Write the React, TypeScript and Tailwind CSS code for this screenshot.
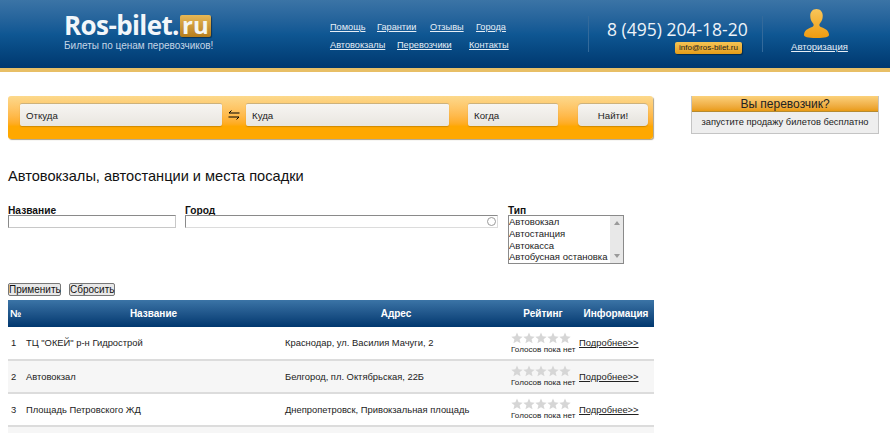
const navTop = [
  { label: "Помощь", cls: "w-[47px]" },
  { label: "Гарантии", cls: "w-[53px]" },
  { label: "Отзывы", cls: "w-[46px]" },
  { label: "Города", cls: "" },
];
const navBottom = [
  { label: "Автовокзалы", cls: "w-[67px]" },
  { label: "Перевозчики", cls: "w-[72px]" },
  { label: "Контакты", cls: "" },
];

const rows = [
  { id: 1, name: 'ТЦ "ОКЕЙ" р-н Гидрострой', address: "Краснодар, ул. Василия Мачуги, 2" },
  { id: 2, name: "Автовокзал", address: "Белгород, пл. Октябрьская, 22Б" },
  { id: 3, name: "Площадь Петровского ЖД", address: "Днепропетровск, Привокзальная площадь" },
];

const types = ["Автовокзал", "Автостанция", "Автокасса", "Автобусная остановка"];

function Stars() {
  return (
    <div className="flex h-[12px]">
      {[0, 1, 2, 3, 4].map((i) => (
        <svg key={i} viewBox="0 0 24 24" className="w-[12px] h-[12px] fill-[#d6d6d6]">
          <path d="M12 1l3.2 7.6 8.2.7-6.2 5.4 1.9 8L12 18.4 4.900 22.700l1.900-8L.6 9.300l8.200-.7z" />
        </svg>
      ))}
    </div>
  );
}

function SearchField({ label, cls }: { label: string; cls: string }) {
  return (
    <div className={`h-[23px] rounded-[2px] bg-gradient-to-b from-[#f7f5f2] to-[#e9e6e0] border-t border-[#cdb27c] shadow-[0_1px_1px_rgba(160,110,0,0.5)] pl-[6px] text-[9.700px] leading-[23px] text-[#222] ${cls}`}>
      {label}
    </div>
  );
}

export default function App() {
  return (
    <div className="w-[890px] h-[433px] overflow-hidden bg-white font-['Liberation_Sans',sans-serif] text-[#111]">
      <header className="h-[72px] bg-gradient-to-b from-[#3b74a6] via-[#0f5793] to-[#01386f] border-b-[4px] border-[#e8bf66] flex">
        <div className="w-[330px] pl-[64px] pt-[12px] shrink-0">
          <div className="flex items-center h-[27px]">
            <span className="text-[26px] leading-[27px] font-bold text-[#f2f6fa] font-['Open_Sans',sans-serif] tracking-[-0.6px]">Ros-bilet.</span>
            <span className="ml-[1px] h-[22px] w-[31px] rounded-[2px] bg-gradient-to-b from-[#e6b755] to-[#b57d1a] shadow-[1px_1px_1px_rgba(0,0,0,0.4)] text-[24px] leading-[20px] font-bold text-[#f4f6f2] text-center font-['Open_Sans',sans-serif]">ru</span>
          </div>
          <div className="text-[10px] leading-[13px] text-[#c4d5e6]">Билеты по ценам перевозчиков!</div>
        </div>
        <nav className="w-[258px] shrink-0 pt-[20px] text-[9.200px] leading-[14px] text-[#e6eef6] underline">
          <div className="flex h-[18px]">
            {navTop.map((n) => (
              <a key={n.label} className={n.cls}>{n.label}</a>
            ))}
          </div>
          <div className="flex">
            {navBottom.map((n) => (
              <a key={n.label} className={n.cls}>{n.label}</a>
            ))}
          </div>
        </nav>
        <div className="w-[175px] h-[36px] mt-[16px] shrink-0 border-l border-r border-[#336a9b] pl-[18px]">
          <div className="mt-[1px] text-[17.500px] leading-[24px] text-[#eef3f8] font-['Open_Sans',sans-serif] whitespace-nowrap">8 (495) 204-18-20</div>
          <div className="ml-[68px] mt-[1px] w-[67px] h-[12px] rounded-[2px] bg-gradient-to-b from-[#f5c453] to-[#e59d14] shadow-[1px_1px_1px_rgba(0,0,0,0.4)] text-[8px] leading-[12px] text-center text-[#222]">info@ros-bilet.ru</div>
        </div>
        <div className="flex-1 flex flex-col items-center pt-[9px] pr-[14px]">
          <svg viewBox="0 0 26 30" className="w-[25px] h-[29px] mr-[7px]">
            <defs>
              <linearGradient id="person" x1="0" y1="0" x2="0" y2="1">
                <stop offset="0" stopColor="#f9c65a" />
                <stop offset="1" stopColor="#ee9b10" />
              </linearGradient>
            </defs>
            <path fill="url(#person)" d="M13 0c4 0 6.500 3 6.500 7 0 3-1 6-3 8-.8 1-.8 2.500.5 3.500 3 1.500 8.500 2.500 9 8 .2 2-3 3.500-13 3.500S-.2 28.500 0 26.500c.5-5.500 6-6.500 9-8 1.300-1 1.300-2.500.5-3.500-2-2-3-5-3-8 0-4 2.500-7 6.500-7z" />
          </svg>
          <a className="mt-[2px] text-[9.500px] leading-[14px] text-[#e6eef6] underline">Авторизация</a>
        </div>
      </header>

      <div className="flex items-start pt-[24px] pl-[8px]">
        <div className="w-[646px] shrink-0">
          <div className="w-[645px] h-[43px] rounded-[3px] bg-gradient-to-b from-[#fcd98c] via-[#ffa800] via-70% to-[#ffa800] shadow-[1px_1px_1px_rgba(120,100,60,0.6)] pt-[7px] pl-[12px] flex text-[9.700px]">
            <SearchField label="Откуда" cls="w-[202px]" />
            <svg viewBox="0 0 12 10" className="w-[12px] h-[10px] mx-[6px] mt-[7px] stroke-[#000] fill-none">
              <path d="M3.500.5 1 3h10.500M8.500 9.500 11 7H.5" />
            </svg>
            <SearchField label="Куда" cls="w-[203px]" />
            <SearchField label="Когда" cls="w-[90px] ml-[19px]" />
            <div className="ml-[20px] w-[70px] h-[23px] rounded-[4px] bg-gradient-to-b from-[#f7f5f2] to-[#e5e2dc] shadow-[0_1px_1px_rgba(160,110,0,0.5)] border-t border-[#cdb27c] text-center leading-[23px] text-[#222]">Найти!</div>
          </div>

          <h1 className="mt-[28px] text-[14.600px] leading-[18px] text-[#111]">Автовокзалы, автостанции и места посадки</h1>

          <div className="mt-[19px] flex items-start text-[10.200px]">
            <label className="block w-[177px]">
              <div className="font-bold leading-[12px] h-[11px] pt-[1px]">Название</div>
              <input className="block w-[168px] h-[13px] border border-[#8a8a8a] border-b-[#c8c8c8] border-r-[#c8c8c8] bg-white" />
            </label>
            <label className="block w-[323px]">
              <div className="font-bold leading-[12px] h-[11px] pt-[1px]">Город</div>
              <div className="relative">
                <input className="block w-[313px] h-[13px] border border-[#8a8a8a] border-b-[#dcdcdc] border-r-[#dcdcdc] bg-white" />
                <span className="absolute left-[302px] top-[2px] w-[9px] h-[9px] rounded-full border border-[#9a9a9a]" />
              </div>
            </label>
            <div className="w-[116px]">
              <div className="font-bold leading-[12px] h-[11px] pt-[1px]">Тип</div>
              <div className="flex h-[49px] border border-[#8a8a8a] text-[9.500px] leading-[11.750px] text-[#222]">
                <div className="flex-1 whitespace-nowrap overflow-hidden">
                  {types.map((t) => (
                    <div key={t}>{t}</div>
                  ))}
                </div>
                <div className="w-[13px] bg-[#e8e8e8] flex flex-col justify-between items-center py-[5px]">
                  <span className="w-0 h-0 border-x-[3.500px] border-x-transparent border-b-[4px] border-b-[#9a9a9a]" />
                  <span className="w-0 h-0 border-x-[3.500px] border-x-transparent border-t-[4px] border-t-[#9a9a9a]" />
                </div>
              </div>
            </div>
          </div>

          <div className="mt-[19px] flex text-[10px]">
            <button className="w-[53px] h-[13px] leading-[11px] border border-[#777] rounded-[2px] bg-[#e8e8e8]">Применить</button>
            <button className="ml-[8px] w-[46px] h-[13px] leading-[11px] border border-[#777] rounded-[2px] bg-[#e8e8e8]">Сбросить</button>
          </div>

          <table className="mt-[4px] w-[646px] table-fixed border-collapse text-[9.400px] text-[#222]">
            <thead>
              <tr className="h-[27px] bg-gradient-to-b from-[#3b74a6] to-[#01386f] text-white text-[10px] font-bold">
                <th className="w-[18px] pl-[2px] text-left">№</th>
                <th className="w-[259px] pr-[4px]">Название</th>
                <th className="w-[225px] pr-[3px]">Адрес</th>
                <th className="w-[68px] pr-[2px]">Рейтинг</th>
                <th className="w-[76px]">Информация</th>
              </tr>
            </thead>
            <tbody>
              {rows.map((r) => (
                <tr key={r.id} className={`h-[33px] border-b-2 border-[#dcdcdc] ${r.id === 2 ? "bg-[#f6f6f6]" : "bg-white"}`}>
                  <td className="pl-[3px] pt-[1px]">{r.id}</td>
                  <td className="pt-[1px]">{r.name}</td>
                  <td className="pt-[1px]">{r.address}</td>
                  <td className="pl-[1px]">
                    <Stars />
                    <div className="text-[8.100px] leading-[11px] whitespace-nowrap">Голосов пока нет</div>
                  </td>
                  <td className="pl-[1px] pt-[1px] underline whitespace-nowrap">Подробнее&gt;&gt;</td>
                </tr>
              ))}
              <tr className="h-[8px] bg-[#f6f6f6]">
                <td colSpan={5} />
              </tr>
            </tbody>
          </table>
        </div>

        <aside className="ml-[37px] w-[188px] shrink-0 border-x border-b border-[#c4c4c4]">
          <div className="h-[16px] bg-gradient-to-b from-[#fbd17a] to-[#e99b10] text-[12px] leading-[17px] text-center text-[#222] border-b border-[#b58a30]">Вы перевозчик?</div>
          <div className="h-[21px] bg-[#eeeeee] text-[9.300px] leading-[21px] text-center text-[#222] whitespace-nowrap">запустите продажу билетов бесплатно</div>
        </aside>
      </div>
    </div>
  );
}
